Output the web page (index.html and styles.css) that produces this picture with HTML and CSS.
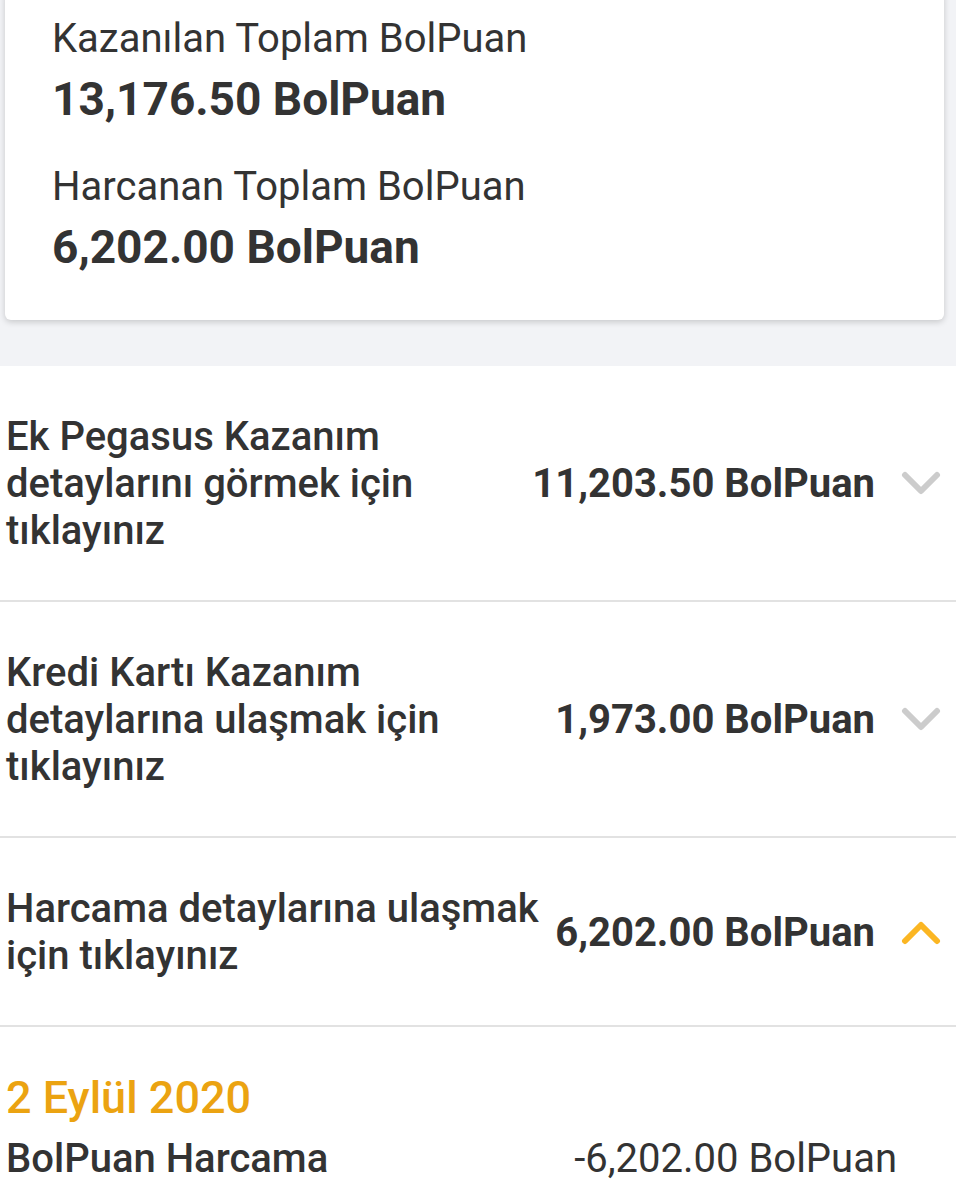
FILE: index.html
```html
<!DOCTYPE html>
<html lang="tr">
<head>
	<meta charset="UTF-8">
	<meta name="viewport" content="width=device-width, initial-scale=1.0">
	<title>BolPuan Detayları</title>
	<link rel="stylesheet" href="styles.css">
</head>
<body>
	<div class="summary">
		<div class="card">
			<p class="label">Kazanılan Toplam BolPuan</p>
			<p class="total">13,176.50 BolPuan</p>
			<p class="label">Harcanan Toplam BolPuan</p>
			<p class="total">6,202.00 BolPuan</p>
		</div>
	</div>

	<div class="row">
		<div class="row-text">Ek Pegasus Kazanım detaylarını görmek için tıklayınız</div>
		<div class="row-amount">11,203.50 BolPuan</div>
		<svg class="chevron" viewBox="0 0 40 28"><path d="M4 5 L20 21 L36 5"/></svg>
	</div>

	<div class="row">
		<div class="row-text">Kredi Kartı Kazanım detaylarına ulaşmak için tıklayınız</div>
		<div class="row-amount">1,973.00 BolPuan</div>
		<svg class="chevron" viewBox="0 0 40 28"><path d="M4 5 L20 21 L36 5"/></svg>
	</div>

	<div class="row">
		<div class="row-text">Harcama detaylarına ulaşmak için tıklayınız</div>
		<div class="row-amount">6,202.00 BolPuan</div>
		<svg class="chevron open" viewBox="0 0 40 28"><path d="M4 23 L20 7 L36 23"/></svg>
	</div>

	<div class="history">
		<h3 class="date">2 Eylül 2020</h3>
		<div class="entry">
			<span class="entry-name">BolPuan Harcama</span>
			<span class="entry-amount">-6,202.00 BolPuan</span>
		</div>
	</div>
</body>
</html>
```

FILE: styles.css
```css
* {
	margin: 0;
	padding: 0;
	box-sizing: border-box;
}

body {
	font-family: Roboto, "Liberation Sans", sans-serif;
	color: #333333;
	background-color: #ffffff;
}

/* summary card */
.summary {
	display: flow-root;
	height: 366px;
	padding: 0 12px 0 5px;
	background-color: #f2f3f6;
}

.card {
	height: 330px;
	margin-top: -10px;
	padding: 25px 47px 0;
	border-radius: 6px;
	background-color: #ffffff;
	box-shadow: 0 2px 6px rgba(0, 0, 0, .18);
}

.label {
	font-size: 40px;
	line-height: 48px;
}

.total {
	margin: 10px 0 38px;
	font-size: 46px;
	font-weight: 700;
	line-height: 52px;
}

/* rows */
.row {
	display: flex;
	align-items: center;
	padding: 47px 15px 46px 6px;
	border-bottom: 2px solid #e2e2e2;
}

.row-text {
	flex: 1;
	font-size: 40px;
	font-weight: 500;
	line-height: 47px;
}

.row-amount {
	flex: none;
	white-space: nowrap;
	font-size: 40px;
	font-weight: 700;
}

.chevron {
	flex: none;
	width: 40px;
	height: 28px;
	margin-left: 26px;
	fill: none;
	stroke: #cccccc;
	stroke-width: 6;
	stroke-linecap: round;
	stroke-linejoin: round;
}

.chevron.open {
	stroke: #fbb623;
}

/* history */
.history {
	padding: 44px 59px 0 6px;
}

.date {
	font-size: 45px;
	font-weight: 500;
	color: #eba311;
	line-height: 54px;
}

.entry {
	display: flex;
	justify-content: space-between;
	margin-top: 10px;
	font-size: 40px;
	line-height: 48px;
}

.entry-name {
	font-weight: 500;
}
```
